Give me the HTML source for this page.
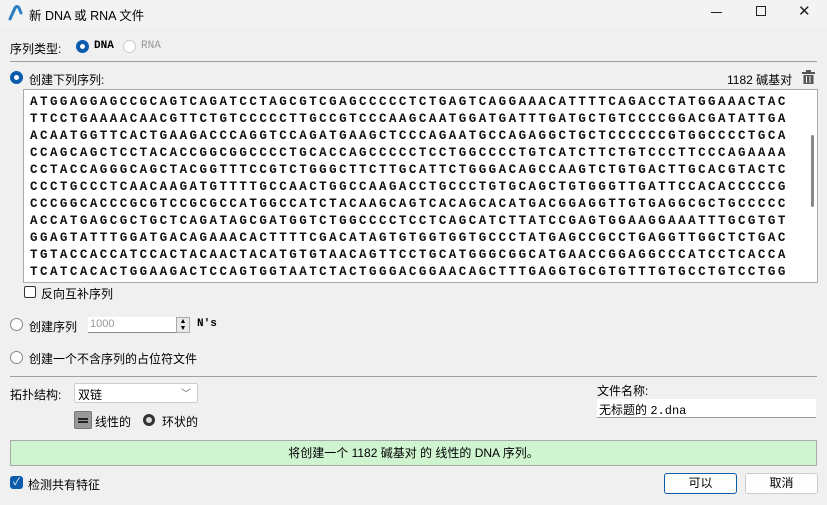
<!DOCTYPE html>
<html><head><meta charset="utf-8"><style>
*{box-sizing:border-box;margin:0;padding:0}
body{width:827px;height:505px;background:#f0f0f0;font-family:"Liberation Sans","Noto Sans CJK SC",sans-serif;font-size:12px;color:#000;position:relative;overflow:hidden}
.a{position:absolute;white-space:nowrap}
.radio{position:absolute;width:13px;height:13px;border-radius:50%;border:1px solid #888;background:#fff}
.radio.on{border:4px solid #0b5cad;background:#fff}
.hr{position:absolute;height:1px;background:#a0a0a0}
.seq{position:absolute;left:23px;top:89px;width:795px;height:194px;background:#fff;border:1px solid #aaa;overflow:hidden}
.seq pre{position:absolute;left:6px;top:4px;font-family:"Liberation Mono",monospace;font-weight:bold;font-size:12.5px;letter-spacing:2.47px;line-height:17px;color:#111}
</style></head><body>
<div class="a" style="left:0;top:0;width:827px;height:26px;background:#f3f3f3"></div>
<svg class="a" style="left:7px;top:5px" width="16" height="16" viewBox="0 0 16 16"><path d="M3 14 L8 3 Q10 0 12 3 L14 8" stroke="#2b7fc4" stroke-width="3" fill="none" stroke-linecap="round"/></svg>
<div class="a" style="left:29px;top:5px;font-size:12.5px">新 DNA 或 RNA 文件</div>
<div class="a" style="left:711px;top:12px;width:11px;height:1px;background:#222"></div>
<div class="a" style="left:756px;top:6px;width:10px;height:10px;border:1px solid #222"></div>
<div class="a" style="left:798px;top:2px;font-size:15px;color:#222">✕</div>

<div class="a" style="left:10px;top:40px">序列类型:</div>
<div class="radio on" style="left:76px;top:40px"></div>
<div class="a" style="left:94px;top:40px;font-family:'Liberation Mono';font-weight:bold;font-size:11px">DNA</div>
<div class="radio" style="left:123px;top:40px;border-color:#ccc"></div>
<div class="a" style="left:141px;top:40px;font-family:'Liberation Mono';font-size:11px;color:#999">RNA</div>
<div class="hr" style="left:10px;top:61px;width:807px"></div>

<div class="radio on" style="left:10px;top:71px"></div>
<div class="a" style="left:29px;top:71px">创建下列序列:</div>
<div class="a" style="left:727px;top:71px;font-size:12px">1182 碱基对</div>
<svg class="a" style="left:802px;top:70px" width="13" height="14" viewBox="0 0 13 14"><rect x="0" y="2" width="13" height="2" fill="#555"/><rect x="4" y="0" width="5" height="2" fill="#555"/><rect x="1.5" y="5" width="10" height="9" fill="#555"/><rect x="4" y="6" width="1" height="7" fill="#fff"/><rect x="7.5" y="6" width="1" height="7" fill="#fff"/></svg>

<div class="seq"><pre>ATGGAGGAGCCGCAGTCAGATCCTAGCGTCGAGCCCCCTCTGAGTCAGGAAACATTTTCAGACCTATGGAAACTAC
TTCCTGAAAACAACGTTCTGTCCCCCTTGCCGTCCCAAGCAATGGATGATTTGATGCTGTCCCCGGACGATATTGA
ACAATGGTTCACTGAAGACCCAGGTCCAGATGAAGCTCCCAGAATGCCAGAGGCTGCTCCCCCCGTGGCCCCTGCA
CCAGCAGCTCCTACACCGGCGGCCCCTGCACCAGCCCCCTCCTGGCCCCTGTCATCTTCTGTCCCTTCCCAGAAAA
CCTACCAGGGCAGCTACGGTTTCCGTCTGGGCTTCTTGCATTCTGGGACAGCCAAGTCTGTGACTTGCACGTACTC
CCCTGCCCTCAACAAGATGTTTTGCCAACTGGCCAAGACCTGCCCTGTGCAGCTGTGGGTTGATTCCACACCCCCG
CCCGGCACCCGCGTCCGCGCCATGGCCATCTACAAGCAGTCACAGCACATGACGGAGGTTGTGAGGCGCTGCCCCC
ACCATGAGCGCTGCTCAGATAGCGATGGTCTGGCCCCTCCTCAGCATCTTATCCGAGTGGAAGGAAATTTGCGTGT
GGAGTATTTGGATGACAGAAACACTTTTCGACATAGTGTGGTGGTGCCCTATGAGCCGCCTGAGGTTGGCTCTGAC
TGTACCACCATCCACTACAACTACATGTGTAACAGTTCCTGCATGGGCGGCATGAACCGGAGGCCCATCCTCACCA
TCATCACACTGGAAGACTCCAGTGGTAATCTACTGGGACGGAACAGCTTTGAGGTGCGTGTTTGTGCCTGTCCTGG</pre>
<div class="a" style="left:785px;top:0;width:9px;height:192px;background:#fff"></div>
<div class="a" style="left:787px;top:45px;width:3px;height:72px;background:#888;border-radius:2px"></div>
</div>

<div class="a" style="left:24px;top:286px;width:12px;height:12px;border:1px solid #333;border-radius:2px;background:#fff"></div>
<div class="a" style="left:41px;top:285px">反向互补序列</div>

<div class="radio" style="left:10px;top:318px"></div>
<div class="a" style="left:29px;top:318px">创建序列</div>
<div class="a" style="left:88px;top:317px;width:88px;height:16px;background:#fff;border-bottom:1px solid #888;color:#999;font-size:11px;padding:1px 2px">1000</div>
<div class="a" style="left:176px;top:317px;width:14px;height:16px;background:#e8e8e8;border:1px solid #aaa;font-size:7px;line-height:7px;text-align:center">▲<br>▼</div>
<div class="a" style="left:197px;top:318px;font-family:'Liberation Mono';font-weight:bold;font-size:11px">N's</div>

<div class="radio" style="left:10px;top:351px"></div>
<div class="a" style="left:29px;top:350px">创建一个不含序列的占位符文件</div>
<div class="hr" style="left:10px;top:376px;width:807px"></div>

<div class="a" style="left:10px;top:386px">拓扑结构:</div>
<div class="a" style="left:74px;top:383px;width:124px;height:20px;background:#fff;border:1px solid #ccc;border-radius:2px;padding:2px 3px">双链<span style="position:absolute;right:6px;top:1px;color:#666;font-size:10px">﹀</span></div>
<div class="a" style="left:74px;top:411px;width:18px;height:18px;background:#999;border:1px solid #777;border-radius:2px"></div>
<div class="a" style="left:78px;top:418px;width:10px;height:1.5px;background:#222"></div>
<div class="a" style="left:78px;top:421px;width:10px;height:1.5px;background:#222"></div>
<div class="a" style="left:95px;top:413px">线性的</div>
<div class="a" style="left:143px;top:414px;width:12px;height:12px;border-radius:50%;border:3px solid #333;background:#ddd"></div>
<div class="a" style="left:162px;top:413px">环状的</div>

<div class="a" style="left:597px;top:382px">文件名称:</div>
<div class="a" style="left:597px;top:399px;width:219px;height:19px;background:#fff;border-bottom:1px solid #999;padding:2px 2px">无标题的 <span style="font-family:'Liberation Mono'">2.dna</span></div>

<div class="a" style="left:10px;top:440px;width:807px;height:26px;background:#cff4d0;border:1px solid #aaa;text-align:center;line-height:24px">将创建一个 1182 碱基对 的 线性的 DNA 序列。</div>

<div class="a" style="left:10px;top:476px;width:13px;height:13px;background:#0b5cad;border-radius:3px;color:#fff;font-size:10px;line-height:13px;text-align:center">✓</div>
<div class="a" style="left:28px;top:476px">检测共有特征</div>

<div class="a" style="left:664px;top:473px;width:73px;height:21px;background:#fdfdfd;border:1px solid #0b5cad;border-radius:3px;text-align:center;line-height:19px">可以</div>
<div class="a" style="left:745px;top:473px;width:73px;height:21px;background:#fdfdfd;border:1px solid #ccc;border-radius:3px;text-align:center;line-height:19px">取消</div>
</body></html>
